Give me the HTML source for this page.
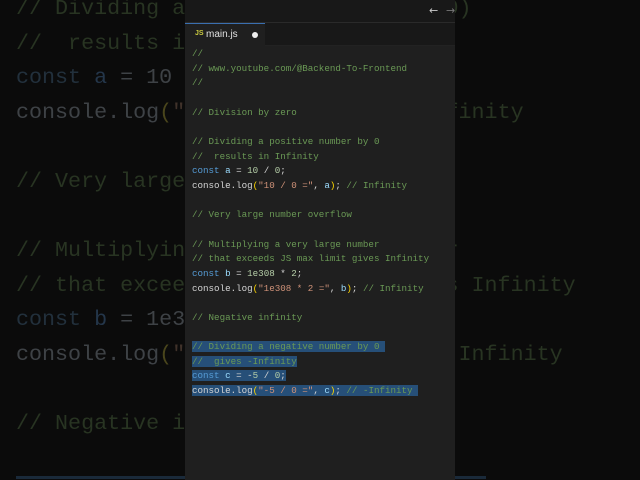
<!DOCTYPE html>
<html><head><meta charset="utf-8"><style>
*{margin:0;padding:0;box-sizing:border-box}
html,body{width:640px;height:480px;overflow:hidden;background:#0b0b0b}
.bg{position:absolute;left:16px;top:-8px;font-family:"Liberation Mono",monospace;font-size:21.7px;line-height:34.6px;white-space:pre;color:#3e4246}
.bg .c{color:#283422}.bg .k{color:#22303c}.bg .v{color:#24364a}.bg .s{color:#40322a}.bg .y{color:#4a461c}
.panel{position:absolute;left:185px;top:0;width:270px;height:480px;background:#1f1f1f}
.top{height:23px;background:#181818;border-bottom:1px solid #2a2a2a;position:relative}
.tabs{height:23px;background:#181818;position:relative;border-bottom:1px solid #222}
.tab{position:absolute;left:0;top:0;width:80px;height:23px;background:#1f1f1f;border-top:1px solid #3a6fb0;font-family:"Liberation Sans",sans-serif;font-size:10px;color:#e0e0e0}
.code{position:absolute;left:7px;top:47px;font-family:"Liberation Mono",monospace;font-size:9.2px;line-height:14.65px;white-space:pre;color:#d4d4d4}
.c{color:#6a9955}.k{color:#569cd6}.v{color:#9cdcfe}.n{color:#b5cea8}.s{color:#ce9178}.y{color:#ffd700}
.sel{background:#264f78}
</style></head><body>
<div class="bg"><span class="c">// Dividing a negative number by 0)</span>
<span class="c">//  results in Infinity</span>
<span class="k">const</span> <span class="v">a</span> = 10 / 0;
console.log<span class="y">(</span><span class="s">"10 / 0 ="</span>, a<span class="y">)</span>; <span class="c">// Infinity</span>

<span class="c">// Very large number overflow</span>

<span class="c">// Multiplying a very large number</span>
<span class="c">// that exceeds JS max limit gives Infinity</span>
<span class="k">const</span> <span class="v">b</span> = 1e308 * 2;
console.log<span class="y">(</span><span class="s">"1e308 * 2 ="</span>, b<span class="y">)</span>; <span class="c">// Infinity</span>

<span class="c">// Negative infinity</span></div>
<div style="position:absolute;left:16px;top:476px;width:470px;height:3px;background:#1a2a3a"></div>
<div class="panel">
<div class="top"><span style="position:absolute;left:244px;top:4px;color:#ccc;font:11px 'DejaVu Sans',sans-serif">←</span><span style="position:absolute;left:261px;top:4px;color:#777;font:11px 'DejaVu Sans',sans-serif">→</span></div>
<div class="tabs"><div class="tab"><span style="position:absolute;left:10px;top:6px;color:#cbcb41;font-size:7px;font-weight:bold">JS</span><span style="position:absolute;left:21px;top:5px">main.js</span><span style="position:absolute;left:67px;top:8px;width:6px;height:6px;border-radius:50%;background:#eee"></span></div></div>
<div class="code"><span class="c">//</span>
<span class="c">// www.youtube.com/@Backend-To-Frontend</span>
<span class="c">//</span>

<span class="c">// Division by zero</span>

<span class="c">// Dividing a positive number by 0</span>
<span class="c">//  results in Infinity</span>
<span class="k">const</span> <span class="v">a</span> = <span class="n">10</span> / <span class="n">0</span>;
console.log<span class="y">(</span><span class="s">"10 / 0 ="</span>, <span class="v">a</span><span class="y">)</span>; <span class="c">// Infinity</span>

<span class="c">// Very large number overflow</span>

<span class="c">// Multiplying a very large number</span>
<span class="c">// that exceeds JS max limit gives Infinity</span>
<span class="k">const</span> <span class="v">b</span> = <span class="n">1e308</span> * <span class="n">2</span>;
console.log<span class="y">(</span><span class="s">"1e308 * 2 ="</span>, <span class="v">b</span><span class="y">)</span>; <span class="c">// Infinity</span>

<span class="c">// Negative infinity</span>

<span class="sel"><span class="c">// Dividing a negative number by 0 </span></span>
<span class="sel"><span class="c">//  gives -Infinity</span></span>
<span class="sel"><span class="k">const</span> <span class="v">c</span> = -<span class="n">5</span> / <span class="n">0</span>;</span>
<span class="sel">console.log<span class="y">(</span><span class="s">"-5 / 0 ="</span>, <span class="v">c</span><span class="y">)</span>; <span class="c">// -Infinity</span> </span></div>
</div>
</body></html>
